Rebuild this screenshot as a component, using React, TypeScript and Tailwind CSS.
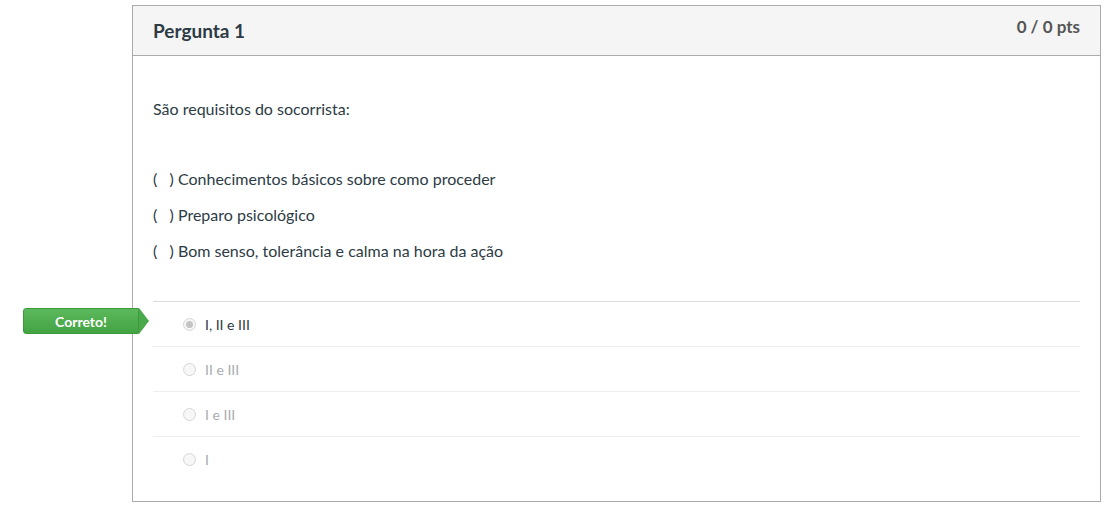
const answers = [
  { label: "I, II e III", selected: true },
  { label: "II e III", selected: false },
  { label: "I e III", selected: false },
  { label: "I", selected: false },
];

function Radio({ selected }: { selected: boolean }) {
  return (
    <span className="flex h-[13px] w-[13px] items-center justify-center rounded-full border border-[#d6d6d6] bg-[#f7f7f7]">
      {selected && <span className="h-[7px] w-[7px] rounded-full bg-[#c4c4c4]" />}
    </span>
  );
}

export default function App() {
  return (
    <div
      className="min-h-[517px] bg-white pl-[132px] pt-[5px] text-[#2d3b45]"
      style={{ fontFamily: "Lato, 'Open Sans', sans-serif" }}
    >
      <div className="w-[969px] border border-[#aaaaaa]">
        {/* header */}
        <div className="flex h-[50px] items-start justify-between border-b border-[#aaaaaa] bg-[#f5f5f5] px-5">
          <h2 className="mt-[12px] text-[19px] font-bold leading-[26px] text-[#2d3b45]">Pergunta 1</h2>
          <span className="mt-[10px] text-[17px] font-bold leading-[22px] text-[#555555]">0 / 0 pts</span>
        </div>

        {/* body */}
        <div className="px-5 pb-[19px]">
          <p className="mt-[41px] text-[16px] leading-[24px]">São requisitos do socorrista:</p>
          <div className="mt-[46px] flex flex-col gap-[12px] text-[16px] leading-[24px]">
            <p>(&nbsp;&nbsp;&nbsp;) Conhecimentos básicos sobre como proceder</p>
            <p>(&nbsp;&nbsp;&nbsp;) Preparo psicológico</p>
            <p>(&nbsp;&nbsp;&nbsp;) Bom senso, tolerância e calma na hora da ação</p>
          </div>

          <div className="mt-[38px] border-t border-[#dddddd]">
            {answers.map((a, i) => (
              <div
                key={a.label}
                className={`relative flex h-[45px] items-center gap-[9px] pl-[30px] ${
                  i < answers.length - 1 ? "border-b border-[#eeeeee]" : ""
                }`}
              >
                {a.selected && (
                  <div className="absolute left-[-130px] top-[6px] flex h-[26px] items-center">
                    <div className="flex h-[26px] w-[116px] items-center justify-center rounded-l-[3px] border border-[#3f9a3f] bg-gradient-to-b from-[#5cb85c] to-[#43a343] text-[14px] font-bold text-white">
                      Correto!
                    </div>
                    <div className="h-0 w-0 border-y-[13px] border-l-[10px] border-y-transparent border-l-[#4aa94a]" />
                  </div>
                )}
                <Radio selected={a.selected} />
                <span className={`text-[14px] ${a.selected ? "text-[#2d3b45]" : "text-[#a9adb0]"}`}>{a.label}</span>
              </div>
            ))}
          </div>
        </div>
      </div>
    </div>
  );
}
